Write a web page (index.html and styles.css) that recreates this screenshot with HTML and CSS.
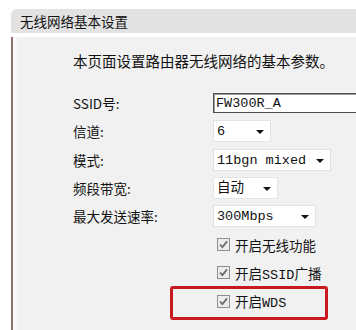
FILE: index.html
```html
<!DOCTYPE html>
<html lang="zh-CN">
<head>
    <meta charset="UTF-8">
    <title>无线网络基本设置</title>
    <link rel="stylesheet" href="styles.css">
</head>
<body>
    <div class="page">
        <div class="title-bar">无线网络基本设置</div>

        <div class="panel">
            <p class="intro">本页面设置路由器无线网络的基本参数。</p>

            <div class="form">
                <div class="row">
                    <span class="label">SSID号:</span>
                    <span class="text-input">FW300R_A</span>
                </div>
                <div class="row">
                    <span class="label">信道:</span>
                    <span class="select select-channel">6<i class="arrow"></i></span>
                </div>
                <div class="row">
                    <span class="label">模式:</span>
                    <span class="select select-mode">11bgn mixed<i class="arrow"></i></span>
                </div>
                <div class="row">
                    <span class="label">频段带宽:</span>
                    <span class="select select-width">自动<i class="arrow"></i></span>
                </div>
                <div class="row">
                    <span class="label">最大发送速率:</span>
                    <span class="select select-rate">300Mbps<i class="arrow"></i></span>
                </div>

                <div class="row check-row">
                    <svg class="checkbox" width="13" height="13" viewBox="0 0 13 13">
                        <rect x="0.5" y="0.5" width="12" height="12" fill="#ececec" stroke="#8e8e8e"/>
                        <path d="M3 6.5 L5.4 9.2 L10 3.4" fill="none" stroke="#6a6a6a" stroke-width="1.8"/>
                    </svg>
                    <span>开启无线功能</span>
                </div>
                <div class="row check-row">
                    <svg class="checkbox" width="13" height="13" viewBox="0 0 13 13">
                        <rect x="0.5" y="0.5" width="12" height="12" fill="#ececec" stroke="#8e8e8e"/>
                        <path d="M3 6.5 L5.4 9.2 L10 3.4" fill="none" stroke="#6a6a6a" stroke-width="1.8"/>
                    </svg>
                    <span>开启SSID广播</span>
                </div>
                <div class="row check-row">
                    <svg class="checkbox" width="13" height="13" viewBox="0 0 13 13">
                        <rect x="0.5" y="0.5" width="12" height="12" fill="#ececec" stroke="#8e8e8e"/>
                        <path d="M3 6.5 L5.4 9.2 L10 3.4" fill="none" stroke="#6a6a6a" stroke-width="1.8"/>
                    </svg>
                    <span>开启WDS</span>
                    <span class="highlight"></span>
                </div>
            </div>
        </div>
    </div>
</body>
</html>
```

FILE: styles.css
```css
/* General Styles */
html, body {
    overflow: hidden;
}

body {
    margin: 0;
    background: #ffffff;
    color: #111;
    font-family: "Noto Sans CJK SC", sans-serif;
    font-size: 13.5px;
}

.page {
    padding: 9px 0 0 11px;
    height: 321px;
    display: flex;
    flex-direction: column;
}

.title-bar {
    height: 24px;
    line-height: 24px;
    padding-left: 9px;
    background: #e2e2e2;
    border-radius: 6px 0 0 0;
    font-size: 13.5px;
}

.panel {
    flex: 1;
    margin-top: 4px;
    padding: 14px 0 0 60px;
    background: #f1f1f1;
    border-left: 2px solid #8c726d;
    box-shadow: inset 5px 0 3px -2px #fbfbfb;
}

.intro {
    margin: 0 0 18px;
    line-height: 20px;
    font-size: 14.5px;
}

.row {
    position: relative;
    display: flex;
    align-items: center;
    height: 28.3px;
}

.label {
    width: 140px;
    flex-shrink: 0;
}

/* the field runs on past the right edge of the window */
.text-input {
    flex: 1;
    height: 20px;
    line-height: 20px;
    padding-left: 2px;
    box-sizing: border-box;
    background: #fff;
    border: 1px solid #505050;
    border-right: none;
    box-shadow: inset 1px 1px 0 #9a9a9a;
    font-family: "Liberation Mono", monospace;
    font-size: 13.5px;
    white-space: nowrap;
}

.select {
    position: relative;
    flex-shrink: 0;
    height: 22px;
    line-height: 22px;
    padding-left: 3px;
    box-sizing: border-box;
    background: #fff;
    border: 1px solid #e4e4e4;
    font-family: "Liberation Mono", "Noto Sans CJK SC", monospace;
    font-size: 13.5px;
    white-space: nowrap;
}

.select-channel { width: 58px; }
.select-mode { width: 118px; }
.select-width { width: 65px; }
.select-rate { width: 103px; }

.arrow {
    position: absolute;
    right: 6px;
    top: 9px;
    width: 0;
    height: 0;
    border-left: 4px solid transparent;
    border-right: 4px solid transparent;
    border-top: 4px solid #111;
}

.check-row {
    padding-left: 144px;
    font-family: "Liberation Mono", "Noto Sans CJK SC", monospace;
}

.checkbox {
    margin-right: 5px;
    flex-shrink: 0;
}

.highlight {
    position: absolute;
    left: 97px;
    top: -1px;
    width: 158px;
    height: 34px;
    box-sizing: border-box;
    border: 3.5px solid #c8191e;
    border-radius: 3px;
}
```
